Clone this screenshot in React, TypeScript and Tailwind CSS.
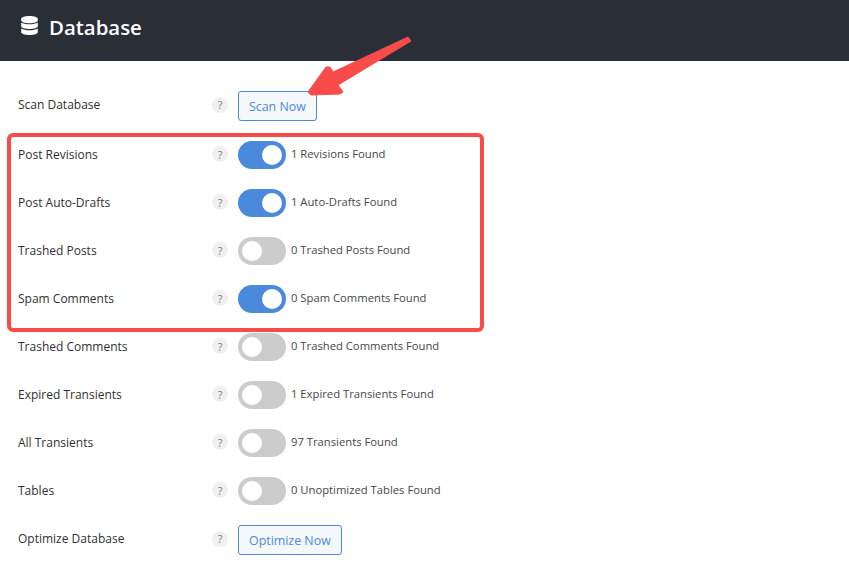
import { FaDatabase } from "react-icons/fa";

const rows = [
  { label: "Post Revisions", on: true, note: "1 Revisions Found" },
  { label: "Post Auto-Drafts", on: true, note: "1 Auto-Drafts Found" },
  { label: "Trashed Posts", on: false, note: "0 Trashed Posts Found" },
  { label: "Spam Comments", on: true, note: "0 Spam Comments Found" },
  { label: "Trashed Comments", on: false, note: "0 Trashed Comments Found" },
  { label: "Expired Transients", on: false, note: "1 Expired Transients Found" },
  { label: "All Transients", on: false, note: "97 Transients Found" },
  { label: "Tables", on: false, note: "0 Unoptimized Tables Found" },
];

function Help() {
  return (
    <div className="w-[16px] h-[16px] mr-[10px] rounded-full bg-[#f0f0f0] flex items-center justify-center text-[11px] leading-none text-[#7a7a7a]">
      ?
    </div>
  );
}

function Toggle({ on }: { on: boolean }) {
  return (
    <div
      className={`w-[48px] h-[28px] rounded-full flex items-center px-[4px] ${
        on ? "bg-[#4a89dc] justify-end" : "bg-[#cccccc] justify-start"
      }`}
    >
      <div className="w-[20px] h-[20px] rounded-full bg-white" />
    </div>
  );
}

function ActionRow({ label, action }: { label: string; action: string }) {
  return (
    <div className="h-[48px] flex items-center">
      <div className="w-[194px] text-[#2f3033] -mt-[2px]">{label}</div>
      <div className="-mt-[3px]">
        <Help />
      </div>
      <button className="h-[30px] px-[10px] pt-[2px] border border-[#4a89dc] rounded-[3px] bg-[#f5f8fa] text-[#4a89dc] text-[12.4px]">
        {action}
      </button>
    </div>
  );
}

export default function App() {
  return (
    <div className="relative w-[849px] h-[568px] bg-white overflow-hidden font-['Open_Sans','Noto_Sans',sans-serif] text-[12px]">
      {/* Header */}
      <div className="h-[61px] bg-[#2a2e37] flex items-center pl-[21px]">
        <FaDatabase className="w-[17px] h-[19px] text-white -mt-[10px]" />
        <h1 className="ml-[11px] -mt-[6px] text-white text-[20.4px] font-semibold">Database</h1>
      </div>

      <div className="pt-[21px] pl-[18px]">
        <ActionRow label="Scan Database" action="Scan Now" />
        <div className="pt-px pb-px">
          {rows.map((row) => (
            <div key={row.label} className="h-[48px] flex items-center">
              <div className="w-[194px] text-[#2f3033] -mt-px">{row.label}</div>
              <div className="-mt-[2px]">
                <Help />
              </div>
              <Toggle on={row.on} />
              <span className="ml-[5px] -mt-[2px] text-[#45464a] text-[11.25px]">{row.note}</span>
            </div>
          ))}
        </div>
        <ActionRow label="Optimize Database" action="Optimize Now" />
      </div>

      {/* Annotation overlay */}
      <div className="absolute left-[7px] top-[133px] w-[477px] h-[199px] border-[4px] border-[#f94c4a] rounded-[6px]" />
      <svg className="absolute left-0 top-0" width="849" height="568" viewBox="0 0 849 568" fill="none">
        <path
          d="M408 37 L411 41 L338 85 L343 92 L340 94 L311 95 L308 92 L326 67 L330 67 L333 72 Z"
          fill="#f94c4a"
          stroke="#f94c4a"
          strokeWidth="1"
          strokeLinejoin="round"
        />
      </svg>
    </div>
  );
}
